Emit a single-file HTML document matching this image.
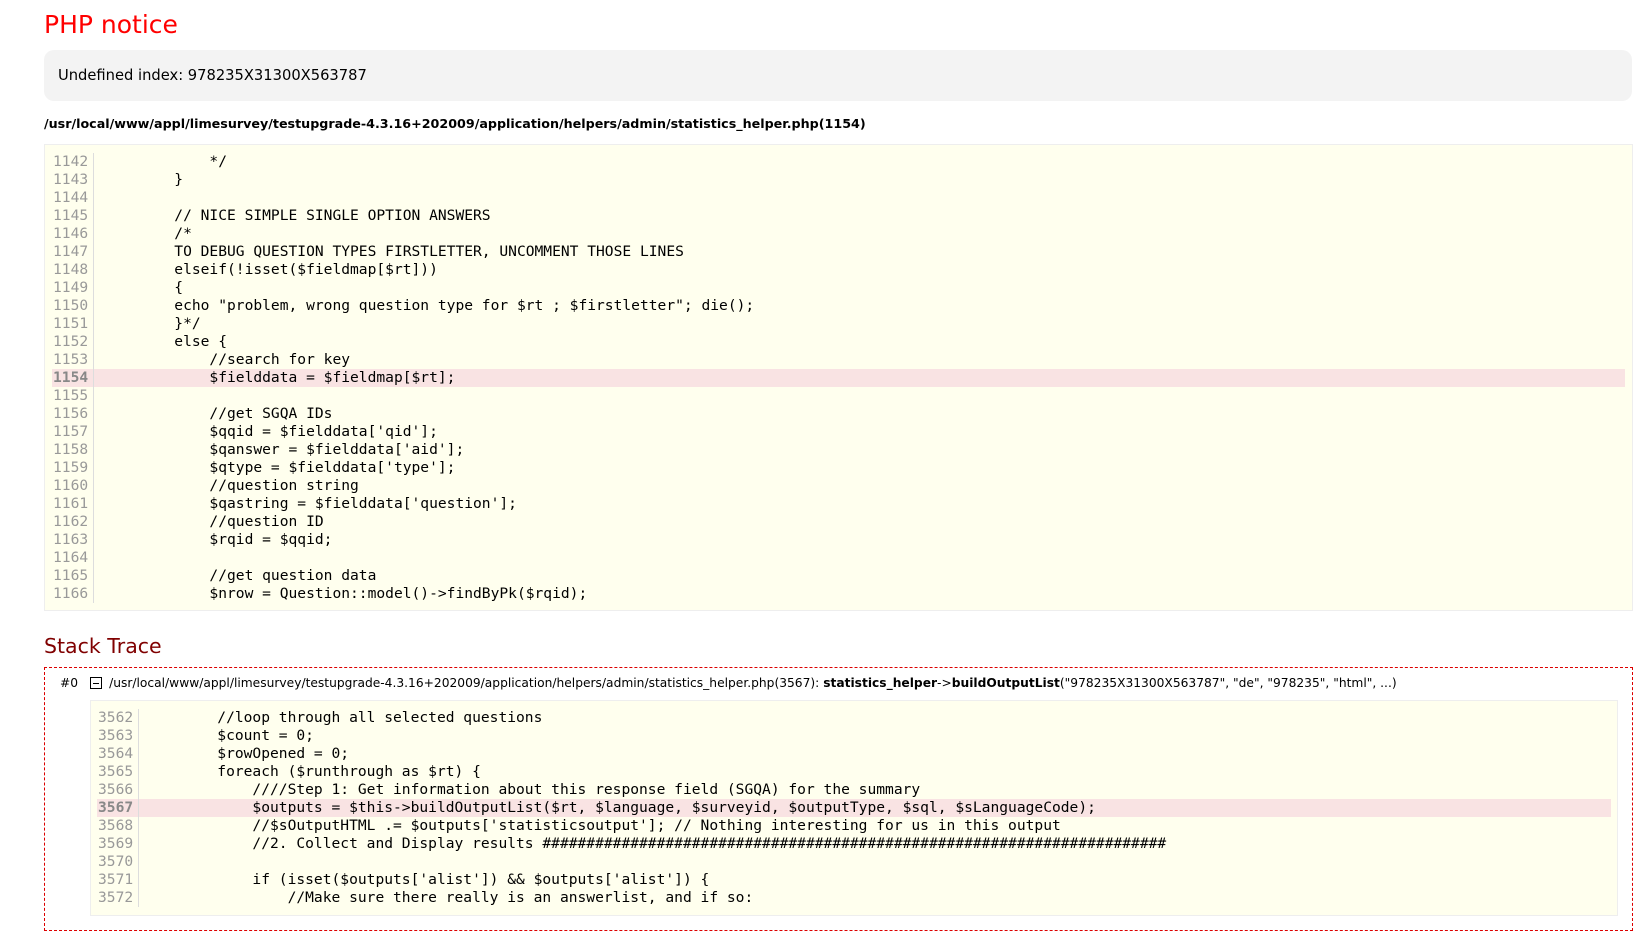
<!DOCTYPE html>
<html><head><meta charset="utf-8"><style>
body{margin:0;background:#fff;font-family:"Liberation Sans",Verdana,sans-serif;color:#000;width:1638px;height:934px;overflow:hidden}
h1{position:absolute;left:44px;top:10px;margin:0;font-weight:normal;font-size:25px;color:#f00;font-family:"DejaVu Sans",Verdana,sans-serif}
.msg{position:absolute;left:44px;top:50px;width:1588px;height:51px;background:#f3f3f3;border-radius:10px;box-sizing:border-box;padding:16px 14px;font-size:14.7px;font-family:"DejaVu Sans",Verdana,sans-serif;line-height:20px}
.path{position:absolute;left:44px;top:116px;font-size:12.7px;font-weight:bold;font-family:"DejaVu Sans",Verdana,sans-serif}
.code{position:absolute;background:#ffffee;border:1px solid #eee;box-sizing:border-box;font-family:"DejaVu Sans Mono","Liberation Mono",monospace;font-size:14.6px}
.row{height:18px;line-height:18px;white-space:pre;position:relative}
.row .n{position:absolute;color:#999;border-right:1px solid #ddd;height:18px;box-sizing:border-box}
.row.hl{background:#f9e3e3}
.row.hl .n{font-weight:bold;color:#888}
h2{position:absolute;left:44px;top:634px;margin:0;font-weight:normal;font-size:20.5px;color:#800000;font-family:"DejaVu Sans",Verdana,sans-serif}
.trace{position:absolute;left:44px;top:667px;width:1589px;height:264px;border:1px dashed #d00;box-sizing:border-box}
.tl{position:absolute;left:60px;top:676px;font-size:12.25px;font-family:"DejaVu Sans",Verdana,sans-serif;white-space:nowrap}
.tl .b{display:inline-block;width:10px;height:10px;border:1px solid #000;vertical-align:-2px;margin:0 7px 0 12px;position:relative}
.tl .b:after{content:"";position:absolute;left:2px;right:2px;top:5px;border-top:1px solid #000}
</style></head><body>
<h1>PHP notice</h1>
<div class="msg">Undefined index: 978235X31300X563787</div>
<div class="path">/usr/local/www/appl/limesurvey/testupgrade-4.3.16+202009/application/helpers/admin/statistics_helper.php(1154)</div>
<div class="code" style="left:44px;top:144px;width:1589px;height:467px;padding-top:8px">
<div style="margin:0 7px">
<div class="row"><span class="n" style="left:0;width:42px;padding-left:1px">1142</span><span style="position:absolute;left:52px">            */</span></div>
<div class="row"><span class="n" style="left:0;width:42px;padding-left:1px">1143</span><span style="position:absolute;left:52px">        }</span></div>
<div class="row"><span class="n" style="left:0;width:42px;padding-left:1px">1144</span></div>
<div class="row"><span class="n" style="left:0;width:42px;padding-left:1px">1145</span><span style="position:absolute;left:52px">        // NICE SIMPLE SINGLE OPTION ANSWERS</span></div>
<div class="row"><span class="n" style="left:0;width:42px;padding-left:1px">1146</span><span style="position:absolute;left:52px">        /*</span></div>
<div class="row"><span class="n" style="left:0;width:42px;padding-left:1px">1147</span><span style="position:absolute;left:52px">        TO DEBUG QUESTION TYPES FIRSTLETTER, UNCOMMENT THOSE LINES</span></div>
<div class="row"><span class="n" style="left:0;width:42px;padding-left:1px">1148</span><span style="position:absolute;left:52px">        elseif(!isset($fieldmap[$rt]))</span></div>
<div class="row"><span class="n" style="left:0;width:42px;padding-left:1px">1149</span><span style="position:absolute;left:52px">        {</span></div>
<div class="row"><span class="n" style="left:0;width:42px;padding-left:1px">1150</span><span style="position:absolute;left:52px">        echo "problem, wrong question type for $rt ; $firstletter"; die();</span></div>
<div class="row"><span class="n" style="left:0;width:42px;padding-left:1px">1151</span><span style="position:absolute;left:52px">        }*/</span></div>
<div class="row"><span class="n" style="left:0;width:42px;padding-left:1px">1152</span><span style="position:absolute;left:52px">        else {</span></div>
<div class="row"><span class="n" style="left:0;width:42px;padding-left:1px">1153</span><span style="position:absolute;left:52px">            //search for key</span></div>
<div class="row hl"><span class="n" style="left:0;width:42px;padding-left:1px">1154</span><span style="position:absolute;left:52px">            $fielddata = $fieldmap[$rt];</span></div>
<div class="row"><span class="n" style="left:0;width:42px;padding-left:1px">1155</span></div>
<div class="row"><span class="n" style="left:0;width:42px;padding-left:1px">1156</span><span style="position:absolute;left:52px">            //get SGQA IDs</span></div>
<div class="row"><span class="n" style="left:0;width:42px;padding-left:1px">1157</span><span style="position:absolute;left:52px">            $qqid = $fielddata['qid'];</span></div>
<div class="row"><span class="n" style="left:0;width:42px;padding-left:1px">1158</span><span style="position:absolute;left:52px">            $qanswer = $fielddata['aid'];</span></div>
<div class="row"><span class="n" style="left:0;width:42px;padding-left:1px">1159</span><span style="position:absolute;left:52px">            $qtype = $fielddata['type'];</span></div>
<div class="row"><span class="n" style="left:0;width:42px;padding-left:1px">1160</span><span style="position:absolute;left:52px">            //question string</span></div>
<div class="row"><span class="n" style="left:0;width:42px;padding-left:1px">1161</span><span style="position:absolute;left:52px">            $qastring = $fielddata['question'];</span></div>
<div class="row"><span class="n" style="left:0;width:42px;padding-left:1px">1162</span><span style="position:absolute;left:52px">            //question ID</span></div>
<div class="row"><span class="n" style="left:0;width:42px;padding-left:1px">1163</span><span style="position:absolute;left:52px">            $rqid = $qqid;</span></div>
<div class="row"><span class="n" style="left:0;width:42px;padding-left:1px">1164</span></div>
<div class="row"><span class="n" style="left:0;width:42px;padding-left:1px">1165</span><span style="position:absolute;left:52px">            //get question data</span></div>
<div class="row"><span class="n" style="left:0;width:42px;padding-left:1px">1166</span><span style="position:absolute;left:52px">            $nrow = Question::model()-&gt;findByPk($rqid);</span></div>
</div></div>
<h2>Stack Trace</h2>
<div class="trace"></div>
<div class="tl">#0<span class="b"></span>/usr/local/www/appl/limesurvey/testupgrade-4.3.16+202009/application/helpers/admin/statistics_helper.php(3567): <b>statistics_helper</b>-&gt;<b>buildOutputList</b>("978235X31300X563787", "de", "978235", "html", ...)</div>
<div class="code" style="left:90px;top:700px;width:1528px;height:216px;padding-top:8px">
<div style="margin:0 6px">
<div class="row"><span class="n" style="left:0;width:42px;padding-left:1px">3562</span><span style="position:absolute;left:50px">        //loop through all selected questions</span></div>
<div class="row"><span class="n" style="left:0;width:42px;padding-left:1px">3563</span><span style="position:absolute;left:50px">        $count = 0;</span></div>
<div class="row"><span class="n" style="left:0;width:42px;padding-left:1px">3564</span><span style="position:absolute;left:50px">        $rowOpened = 0;</span></div>
<div class="row"><span class="n" style="left:0;width:42px;padding-left:1px">3565</span><span style="position:absolute;left:50px">        foreach ($runthrough as $rt) {</span></div>
<div class="row"><span class="n" style="left:0;width:42px;padding-left:1px">3566</span><span style="position:absolute;left:50px">            ////Step 1: Get information about this response field (SGQA) for the summary</span></div>
<div class="row hl"><span class="n" style="left:0;width:42px;padding-left:1px">3567</span><span style="position:absolute;left:50px">            $outputs = $this-&gt;buildOutputList($rt, $language, $surveyid, $outputType, $sql, $sLanguageCode);</span></div>
<div class="row"><span class="n" style="left:0;width:42px;padding-left:1px">3568</span><span style="position:absolute;left:50px">            //$sOutputHTML .= $outputs['statisticsoutput']; // Nothing interesting for us in this output</span></div>
<div class="row"><span class="n" style="left:0;width:42px;padding-left:1px">3569</span><span style="position:absolute;left:50px">            //2. Collect and Display results #######################################################################</span></div>
<div class="row"><span class="n" style="left:0;width:42px;padding-left:1px">3570</span></div>
<div class="row"><span class="n" style="left:0;width:42px;padding-left:1px">3571</span><span style="position:absolute;left:50px">            if (isset($outputs['alist']) &amp;&amp; $outputs['alist']) {</span></div>
<div class="row"><span class="n" style="left:0;width:42px;padding-left:1px">3572</span><span style="position:absolute;left:50px">                //Make sure there really is an answerlist, and if so:</span></div>
</div></div>
</body></html>
